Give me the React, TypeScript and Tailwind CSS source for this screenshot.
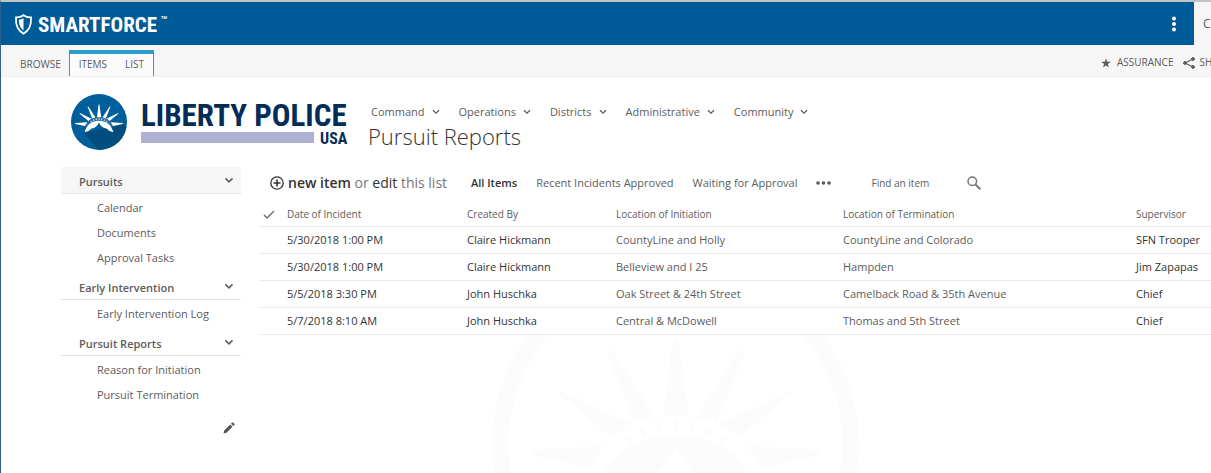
import React from "react";

const topNav = ["Command", "Operations", "Districts", "Administrative", "Community"];

const sideNav = [
  { title: "Pursuits", active: true, items: ["Calendar", "Documents", "Approval Tasks"] },
  { title: "Early Intervention", active: false, items: ["Early Intervention Log"] },
  { title: "Pursuit Reports", active: false, items: ["Reason for Initiation", "Pursuit Termination"] },
];

const columns = ["Date of Incident", "Created By", "Location of Initiation", "Location of Termination", "Supervisor"];

const rows = [
  ["5/30/2018 1:00 PM", "Claire Hickmann", "CountyLine and Holly", "CountyLine and Colorado", "SFN Trooper"],
  ["5/30/2018 1:00 PM", "Claire Hickmann", "Belleview and I 25", "Hampden", "Jim Zapapas"],
  ["5/5/2018 3:30 PM", "John Huschka", "Oak Street & 24th Street", "Camelback Road & 35th Avenue", "Chief"],
  ["5/7/2018 8:10 AM", "John Huschka", "Central & McDowell", "Thomas and 5th Street", "Chief"],
];

function Chevron({ className = "" }: { className?: string }) {
  return (
    <svg viewBox="0 0 8 6" className={className} fill="none" stroke="currentColor" strokeWidth="1.3" aria-hidden="true">
      <path d="M1 1.2 4 4.2 7 1.2" />
    </svg>
  );
}

function Crown({ band }: { band: string }) {
  return (
    <>
      <path d="M-38-79 -8-312Q0-328 8-312L42-79Z" />
      <path d="M-123-60-206-272Q-205-290-190-277L-63-80Z" />
      <path d="M123-60 206-272Q205-290 190-277L63-80Z" />
      <path d="M-193-20-350-148Q-358-164-338-157L-135-60Z" />
      <path d="M193-20 350-148Q358-164 338-157L135-60Z" />
      <path d="M-238 78-430 36Q-443 26-428 20L-210 6Z" />
      <path d="M238 78 430 36Q443 26 428 20L210 6Z" />
      <path d="M-232 90C-180-20-105-54 0-54C105-54 180-20 232 90" fill="none" stroke={band} strokeWidth="60" />
      <path d="M-262 180C-215 40-130-22 0-24C130-22 215 40 262 180Q190 185 135 120Q45 110 0 10Q-45 110-135 120Q-190 185-262 180Z" />
      <ellipse cx="0" cy="-54" rx="9" ry="19" />
      <ellipse cx="-50" cy="-49" rx="9" ry="19" transform="rotate(-14 -50 -49)" />
      <ellipse cx="50" cy="-49" rx="9" ry="19" transform="rotate(14 50 -49)" />
      <ellipse cx="-98" cy="-34" rx="8" ry="18" transform="rotate(-27 -98 -34)" />
      <ellipse cx="98" cy="-34" rx="8" ry="18" transform="rotate(27 98 -34)" />
      <ellipse cx="-142" cy="-10" rx="8" ry="17" transform="rotate(-38 -142 -10)" />
      <ellipse cx="142" cy="-10" rx="8" ry="17" transform="rotate(38 142 -10)" />
    </>
  );
}

function SmartforceLogo() {
  return (
    <a href="#" aria-label="Smartforce" className="block">
      <svg width="160" height="28" viewBox="0 0 160 28" fill="#fff">
        <path d="M9.5 5.2C12 7 14.5 7.6 17 7.4C17.4 14 15.5 20.5 9.5 23.6C3.5 20.5 1.6 14 2 7.4C4.5 7.6 7 7 9.5 5.2Z" fill="none" stroke="#fff" strokeWidth="1.8" />
        <path d="M9.5 8.2V20.4C6 18 4.9 14 4.9 9.7C6.8 9.6 8.2 9.1 9.5 8.2Z" />
        <text x="24" y="22" fontSize="21" fontWeight="700" className="font-['Roboto_Condensed','Liberation_Sans_Narrow','Open_Sans',sans-serif]">SMARTFORCE</text>
        <text x="147" y="9" fontSize="4" fontWeight="700" className="font-['Open_Sans',sans-serif]">TM</text>
      </svg>
    </a>
  );
}

function PoliceLogo() {
  return (
    <a href="#" aria-label="Liberty Police USA" className="block shrink-0">
      <svg width="284" height="60" viewBox="0 0 284 60" className="overflow-visible">
        <defs>
          <clipPath id="seal">
            <circle cx="31" cy="31" r="28" />
          </clipPath>
        </defs>
        <circle cx="31" cy="31" r="28" fill="#005f9b" />
        <path d="M55 33 70 48 60 70H40L16 42Z" fill="#004d7e" clipPath="url(#seal)" />
        <g transform="translate(31 31) scale(.0551)" fill="#fff">
          <Crown band="#2b70a0" />
        </g>
        <text x="73" y="35" fontSize="31" fontWeight="700" fill="#032d57" className="font-['Roboto_Condensed','Liberation_Sans_Narrow',Roboto,sans-serif]">LIBERTY POLICE</text>
        <rect x="73" y="41" width="173" height="11" fill="#adb2d2" />
        <text x="252" y="53" fontSize="16" fontWeight="700" fill="#032d57" className="font-['Roboto_Condensed','Liberation_Sans_Narrow',Roboto,sans-serif]">USA</text>
      </svg>
    </a>
  );
}

export default function App() {
  return (
    <div className="flex min-h-screen flex-col overflow-hidden whitespace-nowrap border-l border-t-2 border-l-[#2f5f8f] border-t-[#c3c3c3] bg-white font-['Open_Sans','Noto_Sans',sans-serif] text-[11px] text-[#5c5c5c]">
      <header className="flex h-[43px] bg-[#f6f6f6]">
        <div className="flex flex-1 items-center justify-between bg-[#005c99] pl-[13px] pr-3">
          <SmartforceLogo />
          <button type="button" aria-label="More options" className="flex h-6 w-4 items-center justify-center">
            <svg width="4" height="16" viewBox="0 0 4 16" fill="#fff">
              <circle cx="2" cy="2.5" r="2" />
              <circle cx="2" cy="8" r="2" />
              <circle cx="2" cy="13.5" r="2" />
            </svg>
          </button>
        </div>
        <div className="w-[17px] overflow-hidden pl-[9px] text-xs leading-[43px]">C</div>
      </header>

      <div className="flex h-8 justify-between overflow-hidden border-b border-[#eee] bg-[#f6f6f6] text-[10px]">
        <nav className="flex items-end pl-[19px]">
          <a href="#" className="mr-2 leading-6">BROWSE</a>
          <div className="flex h-[26px] gap-[18px] border-x border-t-4 border-[#2aa0c8] bg-[#fbfbfb] px-[9px] leading-5">
            <a href="#">ITEMS</a>
            <a href="#">LIST</a>
          </div>
        </nav>
        <div className="flex w-[110px] items-center gap-1 pt-1">
          <svg viewBox="0 0 10 10" className="mr-[2px] size-[10px] shrink-0" fill="#5c5c5c">
            <path d="M5 .3 6.2 3.8H9.9L6.9 6 8 9.6 5 7.4 2 9.6 3.1 6 .1 3.8H3.8Z" />
          </svg>
          <a href="#" className="mr-[6px]">ASSURANCE</a>
          <svg viewBox="0 0 12 12" className="size-3 shrink-0" fill="#5c5c5c" stroke="#5c5c5c">
            <path d="M10 2 2 6 10 10" fill="none" strokeWidth="1.2" />
            <circle cx="10" cy="2" r="1.4" />
            <circle cx="2" cy="6" r="1.4" />
            <circle cx="10" cy="10" r="1.4" />
          </svg>
          <a href="#">SH</a>
        </div>
      </div>

      <div className="flex gap-4 pl-[67px] pt-[14px]">
        <PoliceLogo />
        <div className="pt-[11px]">
          <nav className="flex h-5 items-center gap-[19px] pl-[3px]">
            {topNav.map((name) => (
              <button key={name} type="button" className="flex items-center gap-[7px]">
                {name}
                <Chevron className="h-[6px] w-2" />
              </button>
            ))}
          </nav>
          <h1 className="text-[22px] font-light leading-7 text-[#333]">Pursuit Reports</h1>
        </div>
      </div>

      <div className="flex flex-1 items-stretch pl-[60px] pt-4">
        <aside className="w-[180px] shrink-0">
          {sideNav.map((group) => (
            <section key={group.title} className="mb-1">
              <button
                type="button"
                className={
                  group.active
                    ? "flex h-[27px] w-full items-center justify-between border-b border-[#e5e5e5] bg-[#f6f6f6] pl-[18px] pr-[7px] pt-1 font-semibold"
                    : "flex h-[27px] w-full items-center justify-between border-b border-[#e5e5e5] pl-[18px] pr-[7px] pt-1 font-semibold"
                }
              >
                {group.title}
                <Chevron className="mb-1 h-[7px] w-[10px]" />
              </button>
              <ul>
                {group.items.map((item) => (
                  <li key={item} className="h-[25px] pl-9 leading-[27px]">
                    <a href="#">{item}</a>
                  </li>
                ))}
              </ul>
            </section>
          ))}
          <button type="button" aria-label="Edit links" className="ml-auto mr-[6px] mt-4 block">
            <svg viewBox="0 0 12 12" className="size-3" fill="#555">
              <path d="M.5 11.5 1.2 8.5 7.3 2.4 9.6 4.7 3.5 10.8ZM8 1.7 9.1.6Q9.6.2 10.1.6L11.4 1.9Q11.8 2.4 11.4 2.9L10.3 4Z" />
            </svg>
          </button>
        </aside>

        <main className="relative ml-[18px] min-w-0 flex-1 overflow-hidden">
          <svg viewBox="-560 -560 1120 1120" className="absolute left-[230px] top-[90px] size-[373px]" fill="#fcfcfc" aria-hidden="true">
            <circle r="526" fill="none" stroke="#fcfcfc" strokeWidth="50" />
            <Crown band="#fff" />
          </svg>
          <div className="relative flex h-8 items-center">
            <p className="flex w-[212px] items-center pl-[11px] text-sm text-[#777]">
              <svg viewBox="0 0 14 14" className="mr-1 size-[14px] shrink-0" fill="none" stroke="#333">
                <circle cx="7" cy="7" r="6.2" strokeWidth="1.3" />
                <path d="M7 3.5V10.5M3.5 7H10.5" strokeWidth="1.6" />
              </svg>
              <span className="whitespace-pre">
                <a href="#" className="font-semibold text-[#333]">new item</a> or <a href="#" className="text-[#333]">edit</a> this list
              </span>
            </p>
            <nav className="flex items-center gap-[19px]">
              <a href="#" className="font-semibold text-[#333]">All Items</a>
              <a href="#">Recent Incidents Approved</a>
              <a href="#">Waiting for Approval</a>
              <button type="button" aria-label="More views">
                <svg width="15" height="4" viewBox="0 0 15 4" fill="#555">
                  <circle cx="2" cy="2" r="1.8" />
                  <circle cx="7.5" cy="2" r="1.8" />
                  <circle cx="13" cy="2" r="1.8" />
                </svg>
              </button>
            </nav>
            <form className="ml-10 flex items-center">
              <input aria-label="Find an item" placeholder="Find an item" className="w-24 bg-transparent text-[10px] outline-none placeholder:text-[#5c5c5c]" />
              <button type="button" aria-label="Search">
                <svg viewBox="0 0 14 14" className="size-[14px]" fill="none" stroke="#777">
                  <circle cx="5.3" cy="5.3" r="4.3" strokeWidth="1.5" />
                  <path d="M8.5 8.5 13.3 13.3" strokeWidth="2" />
                </svg>
              </button>
            </form>
          </div>

          <table className="relative mt-1 w-full table-fixed border-collapse bg-white text-left">
            <colgroup>
              <col className="w-7" />
              <col className="w-[180px]" />
              <col className="w-[149px]" />
              <col className="w-[227px]" />
              <col className="w-[293px]" />
              <col />
            </colgroup>
            <thead>
              <tr className="h-[23px] border-b border-[#e8e8e8] text-[10px]">
                <th className="pl-1">
                  <svg viewBox="0 0 12 9" className="h-[9px] w-3" fill="none" stroke="#666" strokeWidth="1.3" aria-label="Select all">
                    <path d="M1 5 4 8 11 1" />
                  </svg>
                </th>
                {columns.map((column) => (
                  <th key={column} className="font-normal">{column}</th>
                ))}
              </tr>
            </thead>
            <tbody>
              {rows.map((row, index) => (
                <tr key={index} className="h-[27px] border-b border-[#eaeaea]">
                  <td />
                  {row.map((value, column) => (
                    <td key={column} className={column === 2 || column === 3 ? "pt-[2px] text-[#5c5c5c]" : "pt-[2px] text-[#333]"}>
                      {value}
                    </td>
                  ))}
                </tr>
              ))}
            </tbody>
          </table>
        </main>
      </div>
    </div>
  );
}
